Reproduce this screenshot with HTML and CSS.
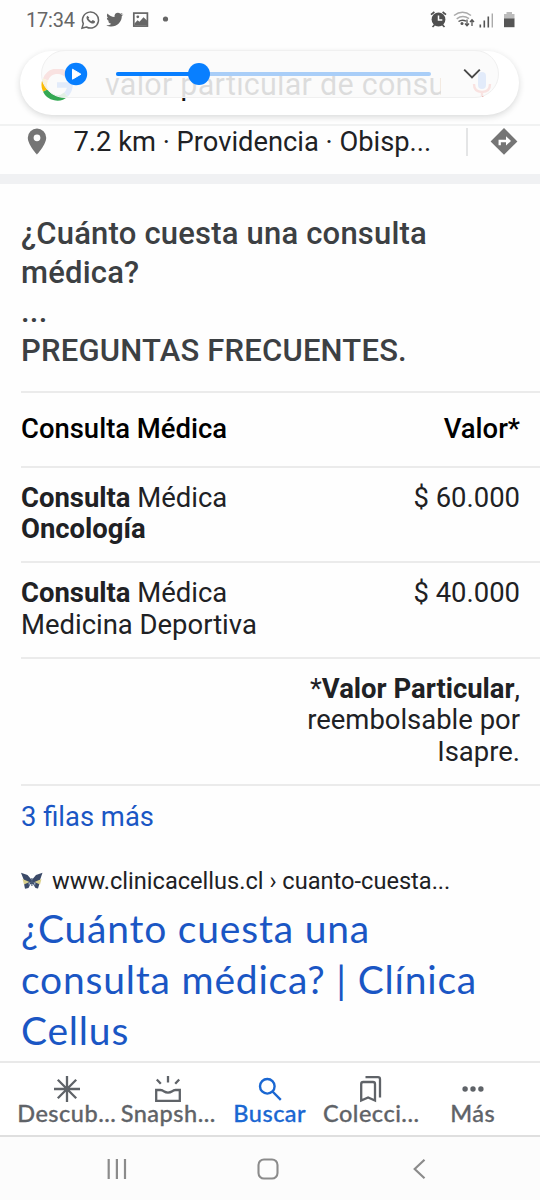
FILE: index.html
```html
<!DOCTYPE html>
<html lang="es">
<head>
<meta charset="utf-8">
<title>Consulta médica</title>
<link rel="stylesheet" href="styles.css">
</head>
<body>
<div class="phone">
  <header class="status">
    <span class="time">17:34</span>
    <svg class="status-left" width="92" height="20" viewBox="0 0 92 20" fill="none">
      <path d="M1 18.300 2.300 13.600A8 8 0 1 1 5.500 17z" stroke="#666" stroke-width="1.500"/>
      <path d="M6.400 5.800c-1.800 1.600-.7 4 1.500 6 2.400 2.200 5.100 2.500 6 .4l.1-1-2.300-1.100-1.200 1.200C9 10.700 8 9.700 7.500 8.500l.8-1z" fill="#666"/>
      <path d="M42.500 4.500l-1.700 1.600c.4 7.500-8.500 13.300-15.500 9.100 2 .1 3.700-.4 5-1.500-1.500-.1-2.700-1.100-3.100-2.400h1.400c-1.700-.5-2.700-1.700-2.700-3.500l1.500.4c-1.600-1.200-1.900-3-.9-4.700 1.900 2.200 4.200 3.400 7 3.600-.6-4.100 3.700-5.500 5.900-3.300l2.200-.8-1.500 2z" fill="#666"/>
      <rect x="52.800" y="3.100" width="13.600" height="13" stroke="#666" stroke-width="1.700"/>
      <circle cx="56.800" cy="6.800" r="1.400" fill="#666"/>
      <path d="M53.500 13.500l3-3.300 2 1.600 4-4.600 3.500 3.300v5H53.500z" fill="#666"/>
      <circle cx="84.500" cy="9" r="2.600" fill="#666"/>
    </svg>
    <svg class="status-right" width="86" height="20" viewBox="0 0 86 20" fill="none">
      <circle cx="8.500" cy="9.500" r="6.900" fill="#4f4f4f"/>
      <path d="M8.500 5.500v4.600h3.800" stroke="#fff" stroke-width="1.500"/>
      <path d="M1 4.700 4.400 2M12.600 2 16 4.700M2.500 17l2-2M14.500 17l-2-2" stroke="#4f4f4f" stroke-width="1.700"/>
      <path d="M24 5.500q8.500-6.500 17 0M26.700 8.800q6-4.500 12.300-.2" stroke="#aaa" stroke-width="1.500"/>
      <path d="M28.500 11.500q3.500-2.500 7.500-.4" stroke="#555" stroke-width="1.500"/>
      <circle cx="32" cy="13.500" r="1.500" fill="#555"/>
      <path d="M37 9.500v6M35 13.500l2 2.300 2-2.300M42 16v-6M40 12l2-2.300 2 2.300" stroke="#555" stroke-width="1.300"/>
      <path d="M50.300 14.500v3M54.300 10.500v7M58.300 6.500v11" stroke="#555" stroke-width="1.600"/>
      <path d="M62.300 3.500v14" stroke="#aaa" stroke-width="1.400"/>
      <path d="M74 4h2.500V2h5.500v2h2.500v5H74z" fill="#bbb"/>
      <path d="M74 8.500h10.500v8.700H74z" fill="#555"/>
    </svg>
  </header>

  <div class="search">
    <div class="pill">
      <svg class="google" width="32" height="32" viewBox="0 0 32 32" fill="none" stroke-width="5.500">
        <path d="M26.500 6.700A13 13 0 0 0 4.500 10.500" stroke="#ea4335"/>
        <path d="M4.500 10.500a13 13 0 0 0 0 11" stroke="#fbbc05"/>
        <path d="M4.500 21.500A13 13 0 0 0 25 25.500" stroke="#34a853"/>
        <path d="M25 25.500q4-4 4-9.500H16" stroke="#4285f4"/>
      </svg>
      <span class="query">valor particular de consu</span>
      <svg class="mic" width="20" height="30" viewBox="0 0 20 30" fill="none">
        <rect x="6" y="2" width="8" height="17" rx="4" fill="#4285f4"/>
        <path d="M2 14q0 8 8 8" stroke="#ea4335" stroke-width="2.400"/>
        <path d="M10 22q8 0 8-8M10 22v5" stroke="#ea4335" stroke-width="2.400"/>
      </svg>
    </div>
    <div class="player">
      <svg class="play" width="24" height="24" viewBox="0 0 24 24"><circle cx="12" cy="12" r="11.200" fill="#087fff"/><path d="M8.500 7.200v10l8.400-5z" fill="#fff" stroke="#fff" stroke-linejoin="round"/></svg>
      <div class="track"><span class="played"></span><span class="knob"></span></div>
      <svg class="chevron" width="18" height="12" viewBox="0 0 18 12" fill="none"><path d="M1.200 1.700 9 9.500l7.800-7.800" stroke="#484848" stroke-width="1.900"/></svg>
    </div>
  </div>

  <section class="place">
    <svg class="pin" width="20" height="28" viewBox="0 0 20 28"><path fill-rule="evenodd" d="M10 .5A9.200 9.200 0 0 0 .8 9.700C.8 16.500 10 26.500 10 26.500s9.200-10 9.200-16.800A9.200 9.200 0 0 0 10 .5zm0 5.900a3.400 3.400 0 1 1 0 6.800 3.400 3.400 0 0 1 0-6.800z" fill="#757575"/></svg>
    <span class="address">7.2 km · Providencia · Obisp...</span>
    <span class="divider"></span>
    <svg class="directions" width="28" height="28" viewBox="0 0 28 28"><path d="M14 0 27.400 13.400 14 26.800.6 13.400z" fill="#757575"/><path d="M9.700 17.200V13h7" fill="none" stroke="#fff" stroke-width="2.300"/><path d="M16 8.200l5 4.700-5 4.700z" fill="#fff"/></svg>
  </section>

  <main class="result">
    <h2 class="question">¿Cuánto cuesta una consulta<br>médica?</h2>
    <div class="faq">...<br>PREGUNTAS FRECUENTES.</div>
    <div class="table">
      <div class="row head"><span>Consulta Médica</span><span>Valor*</span></div>
      <div class="row"><span><b>Consulta</b> Médica<br><b>Oncología</b></span><span>$ 60.000</span></div>
      <div class="row"><span><b>Consulta</b> Médica<br>Medicina Deportiva</span><span>$ 40.000</span></div>
      <div class="row"><span></span><span class="note">*<b>Valor Particular</b>,<br>reembolsable por<br>Isapre.</span></div>
    </div>
    <a class="more">3 filas más</a>
    <div class="source">
      <svg class="favicon" width="22" height="18" viewBox="0 0 22 18"><path d="M0 .8 6.500 3 10.800 8 15 3 21.500.8 19 8l-2.500 1.500 2 2L17 16.500l-2.500-.5-2.500-4h-2.500l-2 4-3.500.7-1-5 2.500-2L2.800 8z" fill="#3b4a68"/><path d="M1.500 7l7 3L3 12.500zM20.500 7l-7 3 5.500 2.500z" fill="#d9d08c"/><path d="M7.500 11l2-1-1.500 4zM14.500 11l-2-1 1.500 4z" fill="#a5b5cc"/><path d="M10.900 6v8" stroke="#4d607d" stroke-width="1.200"/></svg>
      <span class="url">www.clinicacellus.cl › cuanto-cuesta...</span>
    </div>
    <h3 class="title">¿Cuánto cuesta una<br>consulta médica? | Clínica<br>Cellus</h3>
  </main>

  <nav class="tabs">
    <div class="tab"><svg width="28" height="28" viewBox="0 0 28 28" fill="none" stroke="#5f6368" stroke-width="2.300"><path d="M14 1v26M1 14h26M4.800 4.800l18.400 18.400M23.200 4.800 4.800 23.200"/></svg><span>Descub...</span></div>
    <div class="tab"><svg width="28" height="28" viewBox="0 0 28 28" fill="none" stroke="#5f6368" stroke-width="2.300"><path d="M14 1v6.500M2.800 4.500l4 4.200M25.200 4.500l-4 4.200M2.200 15h4.300q2 0 3.200 1.300 4.300 2.700 8.600 0Q19.500 15 21.500 15h4.300v10.800H2.200z"/></svg><span>Snapsh...</span></div>
    <div class="tab active"><svg width="28" height="28" viewBox="0 0 28 28" fill="none" stroke="#1a67d2" stroke-width="2.400"><circle cx="11.300" cy="11.300" r="7.300"/><path d="M16.500 16.500l8.300 8.300"/></svg><span>Buscar</span></div>
    <div class="tab"><svg width="28" height="28" viewBox="0 0 28 28" fill="none" stroke="#5f6368" stroke-width="2.300"><path d="M4.200 25.500V9q0-2 2-2H16q2 0 2 2v16.500l-6.900-3zM8.500 2.200H21q2 0 2 2V22.500"/></svg><span>Colecci...</span></div>
    <div class="tab"><svg width="28" height="28" viewBox="0 0 28 28" fill="#5f6368"><circle cx="6.100" cy="14" r="2.700"/><circle cx="14" cy="14" r="2.700"/><circle cx="21.900" cy="14" r="2.700"/></svg><span>Más</span></div>
  </nav>
  <footer class="system">
    <svg width="22" height="22" viewBox="0 0 22 22" stroke="#8b8b8b" stroke-width="2.200"><path d="M2.700 1v20M10.900 1v20M19 1v20"/></svg>
    <svg width="22" height="22" viewBox="0 0 22 22" fill="none" stroke="#8b8b8b" stroke-width="2.100"><rect x="1.500" y="1.500" width="19" height="19" rx="5.500"/></svg>
    <svg width="22" height="22" viewBox="0 0 22 22" fill="none" stroke="#8b8b8b" stroke-width="2.200"><path d="M16.500 1.700 6.700 11l9.800 9.300"/></svg>
  </footer>
</div>
</body>
</html>
```
FILE: styles.css
```css
* { box-sizing: border-box; }
body { margin: 0; background: #fefefe; font-family: Roboto, "Liberation Sans", sans-serif; color: #202124; }
svg { display: block; flex: none; }
.phone { width: 540px; height: 1200px; display: flex; flex-direction: column; overflow: hidden; }
.status { height: 40px; display: flex; align-items: center; padding: 0 24px 0 26px; }
.time { font-size: 20px; color: #666; width: 48px; margin-right: 7px; white-space: nowrap; letter-spacing: -.2px; }
.status-right { margin-left: auto; }
.search { position: relative; height: 86px; padding: 11px 21px 0 20px; border-bottom: 2px solid #f1f2f2; }
.pill { height: 64px; border-radius: 32px; background: #fff; box-shadow: 0 2px 6px rgba(32,33,36,.17); display: flex; align-items: center; padding: 3px 27px 0 21px; }
.google { width: 32px; }
.query { width: 336px; margin-left: 32px; font-size: 30.5px; line-height: 40px; letter-spacing: .25px; white-space: nowrap; overflow: hidden; color: #111; }
.mic { margin-left: auto; }
.player { position: absolute; left: 41px; top: 10px; width: 458px; height: 48px; border: 1px solid #f0f0f0; border-radius: 24px; background: rgba(250,250,250,.87); display: flex; align-items: center; padding: 0 17px 0 22px; }
.track { position: relative; width: 315px; height: 4px; margin-left: 28px; border-radius: 2px; background: #a9cef8; }
.played { display: block; width: 84px; height: 4px; border-radius: 2px; background: #087fff; }
.knob { position: absolute; left: 72px; top: -9px; width: 22px; height: 22px; border-radius: 50%; background: #087fff; }
.chevron { margin-left: auto; }
.place { height: 58px; display: flex; align-items: flex-start; padding: 2px 22px 0 27px; border-bottom: 10.5px solid #f0f1f3; }
.address { margin-left: 26.500px; font-size: 27.3px; line-height: 28px; width: 392.500px; white-space: nowrap; }
.divider { width: 2px; height: 28px; background: #e4e5e6; }
.directions { margin-left: auto; }
.result { height: 877px; padding-left: 21px; }
.question, .faq { margin: 0; font-size: 31px; font-weight: 500; line-height: 39px; letter-spacing: .2px; color: #3c4043; white-space: nowrap; }
.question { padding-top: 30px; }
.table { margin-top: 21px; border-top: 2px solid #ebebeb; }
.row { display: flex; justify-content: space-between; padding: 15px 20px 15px 0; border-bottom: 2px solid #ebebeb; font-size: 27.450px; line-height: 31.7px; white-space: nowrap; }
.row > span:last-child { text-align: right; }
.head { padding: 21px 20px 20px 0; font-weight: 500; color: #000; }
.more { display: block; margin-top: 15px; font-size: 27.4px; line-height: 32px; color: #1a56c4; }
.source { display: flex; align-items: center; margin-top: 33px; height: 30px; }
.url { margin-left: 9px; font-size: 23.6px; line-height: 30px; white-space: nowrap; }
.title { margin: 7px 0 0; font: 400 39px/51px Lato, sans-serif; letter-spacing: .8px; color: #1a56c4; white-space: nowrap; }
.tabs { height: 76px; border-top: 2px solid #e9e9e9; border-bottom: 2px solid #dfdfdf; background: #fff; display: grid; grid-template-columns: repeat(5, 101.5px); padding-left: 16px; color: #5f6368; }
.tab { display: flex; flex-direction: column; align-items: center; padding-top: 12px; font: 500 23.5px/23px Lato, sans-serif; letter-spacing: .5px; white-space: nowrap; -webkit-text-stroke: .3px currentColor; }
.tab span { margin-top: -1px; }
.active { color: #1a67d2; }
.system { height: 63px; background: #fcfcfc; display: flex; align-items: center; justify-content: space-between; padding: 0 110px 0 106px; }
```
